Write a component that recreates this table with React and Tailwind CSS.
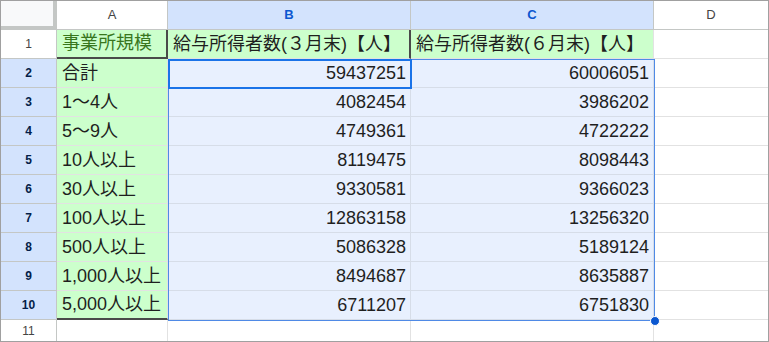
import React from "react";

const rows = [
	["合計", "59437251", "60006051"],
	["1〜4人", "4082454", "3986202"],
	["5〜9人", "4749361", "4722222"],
	["10人以上", "8119475", "8098443"],
	["30人以上", "9330581", "9366023"],
	["100人以上", "12863158", "13256320"],
	["500人以上", "5086328", "5189124"],
	["1,000人以上", "8494687", "8635887"],
	["5,000人以上", "6711207", "6751830"],
];

const font = { fontFamily: "Arial, 'Liberation Sans', 'Noto Sans CJK JP', sans-serif" };

export default function App() {
	return (<div className="w-[769px] h-[342px] overflow-hidden bg-white border border-[#a0a0a0] relative" style={font}>
		<div className="grid grid-cols-[56px_111px_243px_243px_1fr] grid-rows-[29px_repeat(10,29px)_1fr] h-full text-[18px] text-[#1f1f1f]">
			{/* column headers */}
			<div className="bg-[#f8f9fa] border-r-4 border-b-4 border-[#c4c7c5]"></div>
			<div className="flex items-center justify-center text-[13px] text-[#444] border-r border-b border-[#c4c7c5]">A</div>
			<div className="flex items-center justify-center text-[13px] font-bold text-[#0b57d0] bg-[#d3e3fd] border-r border-b border-[#c4c7c5]">B</div>
			<div className="flex items-center justify-center text-[13px] font-bold text-[#0b57d0] bg-[#d3e3fd] border-r border-b border-[#c4c7c5]">C</div>
			<div className="flex items-center justify-center text-[13px] text-[#444] border-b border-[#c4c7c5]">D</div>

			{/* row 1 */}
			<div className="flex items-center justify-center text-[12px] text-[#444] border-r border-b border-[#c4c7c5]">1</div>
			<div className="flex items-center pl-[5px] bg-[#ccffcc] text-[#38761d] border-r-2 border-b-2 border-[#4a4a4a] whitespace-nowrap">事業所規模</div>
			<div className="flex items-center pl-[5px] bg-[#ccffcc] border-r-2 border-b border-[#4a4a4a] border-b-[#e2e2e2] whitespace-nowrap">給与所得者数(３月末)【人】</div>
			<div className="flex items-center pl-[5px] bg-[#ccffcc] border-r border-b border-[#e2e2e2] whitespace-nowrap">給与所得者数(６月末)【人】</div>
			<div className="border-b border-[#e2e2e2]"></div>

			{rows.map((r, i) => (<React.Fragment key={i}>
				<div className="flex items-center justify-center text-[12px] font-bold text-[#041e49] bg-[#d3e3fd] border-r border-b border-[#c4c7c5]">{i + 2}</div>
				<div className={"flex items-center pl-[5px] bg-[#ccffcc] border-r border-b border-[#e2e2e2] whitespace-nowrap " + (i === 8 ? "border-b-2 border-b-[#4a4a4a]" : "")}>{r[0]}</div>
				<div className="flex items-center justify-end pr-[4px] bg-[#e8f0fe] border-r border-b border-[#d6dde8]">{r[1]}</div>
				<div className="flex items-center justify-end pr-[4px] bg-[#e8f0fe] border-r border-b border-[#d6dde8]">{r[2]}</div>
				<div className="border-b border-[#e2e2e2]"></div>
			</React.Fragment>))}

			{/* row 11 */}
			<div className="flex items-center justify-center text-[12px] text-[#444] border-r border-[#c4c7c5]">11</div>
			<div className="border-r border-[#e2e2e2]"></div>
			<div className="border-r border-[#e2e2e2]"></div>
			<div className="border-r border-[#e2e2e2]"></div>
			<div></div>
		</div>

		{/* selection B2:C10 */}
		<div className="absolute left-[167px] top-[58px] w-[487px] h-[262px] border border-[#4f8ae6] pointer-events-none"></div>
		<div className="absolute left-[167px] top-[58px] w-[244px] h-[30px] border-2 border-[#1a73e8] pointer-events-none"></div>
		<div className="absolute left-[649px] top-[315px] w-[10px] h-[10px] rounded-full bg-[#0b57d0] border border-white"></div>
	</div>);
}
